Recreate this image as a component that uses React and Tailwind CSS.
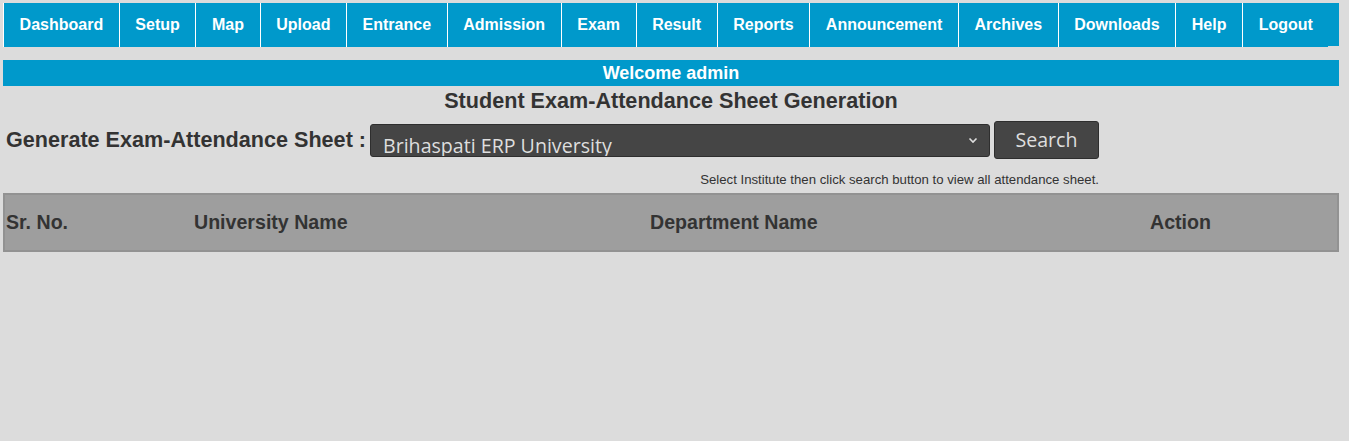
import React from 'react';

const navItems = [
  'Dashboard', 'Setup', 'Map', 'Upload', 'Entrance', 'Admission', 'Exam',
  'Result', 'Reports', 'Announcement', 'Archives', 'Downloads', 'Help', 'Logout',
];

const columns = ['Sr. No.', 'University Name', 'Department Name', 'Action'];

const App = () => {
  return (
    <div className="min-h-[441px] bg-[#dcdcdc] pt-[3px] text-[#333]" style={{ fontFamily: '"Liberation Sans", Arial, sans-serif' }}>
      <div className="w-[1342px]">
        {/* top menu */}
        <ul className="mx-[3px] flex h-[43px] items-start bg-[#0099cb]">
          {navItems.map((item) => (
            <li
              key={item}
              className="flex h-[44px] items-center border-l border-white bg-[#0099cb] px-[15.6px] text-[16px] font-bold text-white"
            >
              {item}
            </li>
          ))}
        </ul>

        <div className="mx-[3px] mt-[14px] flex h-[26px] items-center justify-center bg-[#0099cb] text-[18px] font-bold text-white">
          Welcome admin
        </div>

        <h2 className="flex h-[30px] items-center justify-center text-[21.6px] font-bold">
          Student Exam-Attendance Sheet Generation
        </h2>

        {/* filter row */}
        <div className="mt-[5px] flex h-[38px] items-center pl-[6px]">
          <label className="w-[364px] whitespace-nowrap text-[21.6px] font-bold">
            Generate Exam-Attendance Sheet :
          </label>
          <div
            className="relative h-[33px] w-[620px] overflow-hidden rounded-[3px] border border-[#2e2e2e] bg-[#454545] text-[#dedede]"
            style={{ fontFamily: '"Open Sans", "Noto Sans", sans-serif' }}
          >
            <div className="whitespace-nowrap pl-[12px] pt-[7px] text-[19.6px] leading-[27px]">Brihaspati ERP University</div>
            <svg className="absolute right-[11px] top-[12px]" width="10" height="7" viewBox="0 0 10 7">
              <path d="M1.5 1.5 L5 5 L8.5 1.5" fill="none" stroke="#dedede" strokeWidth="1.6" />
            </svg>
          </div>
          <button
            className="ml-[4px] h-[38px] w-[105px] rounded-[3px] border border-[#2e2e2e] bg-[#454545] text-[19.6px] text-[#dedede]"
            style={{ fontFamily: '"Open Sans", "Noto Sans", sans-serif' }}
          >
            Search
          </button>
        </div>

        <div className="mt-[13px] flex w-[1099px] justify-end text-[13.2px] leading-[16px]">
          Select Institute then click search button to view all attendance sheet.
        </div>

        {/* table header */}
        <div className="mx-[3px] mt-[5px] grid h-[59px] grid-cols-[188px_456px_500px_1fr] items-center border-2 border-[#929292] bg-[#9e9e9e] text-[19.6px] font-bold">
          {columns.map((col) => (
            <div key={col} className="pl-[1px]">{col}</div>
          ))}
        </div>
      </div>
    </div>
  );
};

export default App;
